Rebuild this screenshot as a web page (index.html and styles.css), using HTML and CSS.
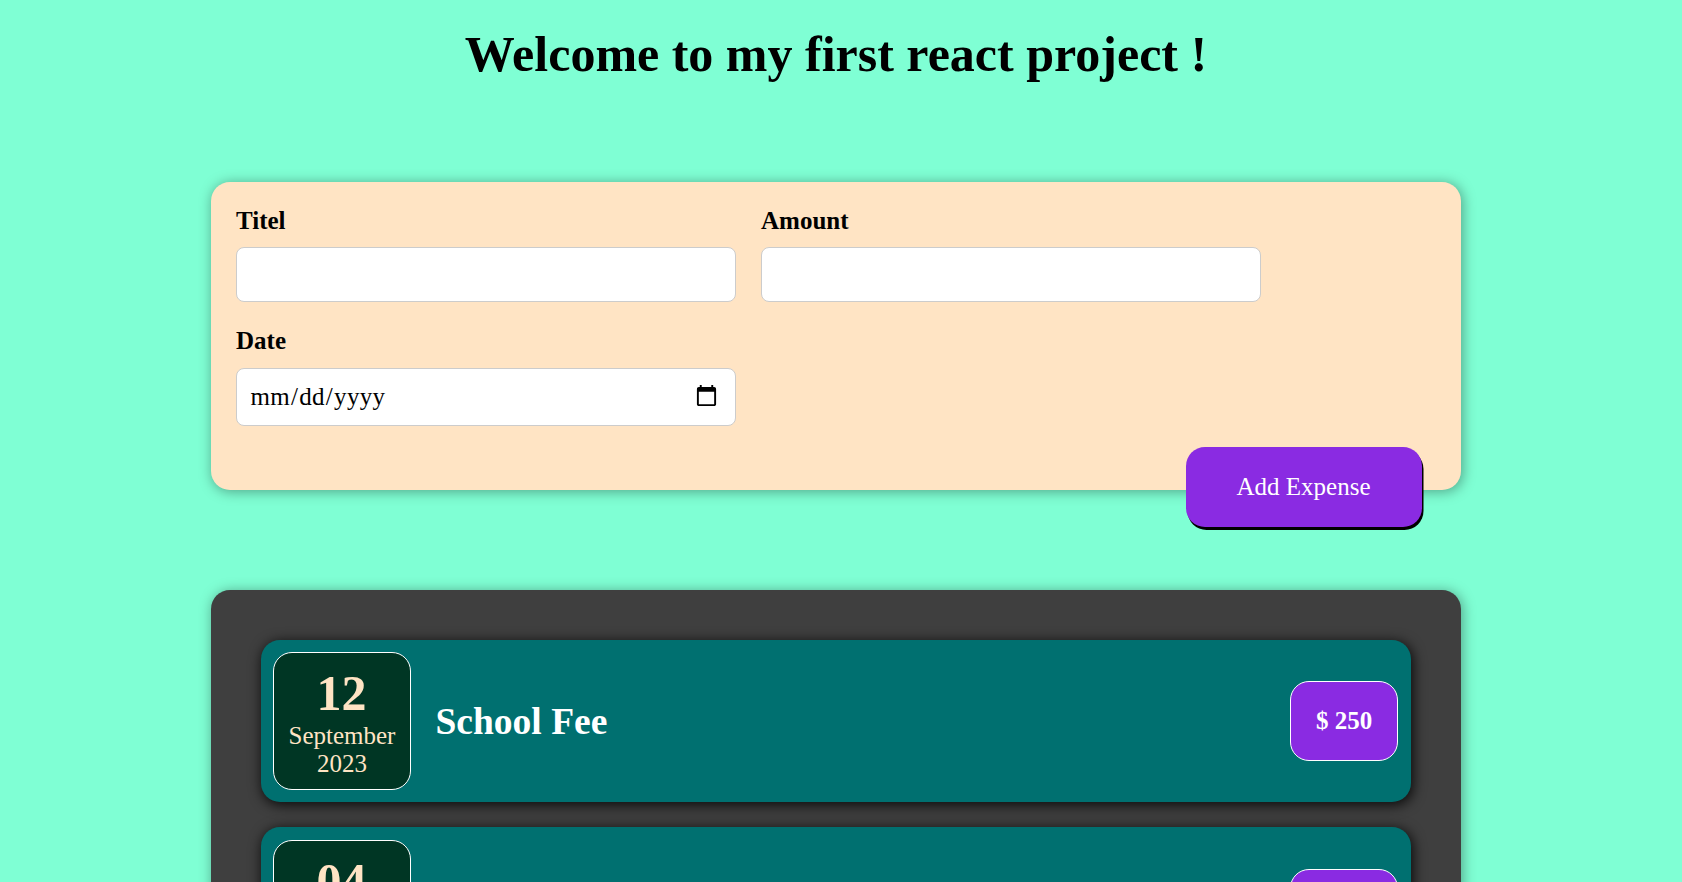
FILE: index.html
```html
<!DOCTYPE html>
<html lang="en-US">
<head>
<meta charset="utf-8">
<title>Expenses</title>
<link rel="stylesheet" href="styles.css">
</head>
<body>
<main class="page">
  <h1 class="heading">Welcome to my first react project !</h1>
  <form class="new-expense">
    <div class="control">
      <label class="label" for="title">Titel</label>
      <input class="input" id="title" type="text">
    </div>
    <div class="control">
      <label class="label" for="amount">Amount</label>
      <input class="input" id="amount" type="number">
    </div>
    <div class="control control-date">
      <label class="label" for="date">Date</label>
      <input class="input input-date" id="date" type="date">
    </div>
    <button class="add" type="button">Add Expense</button>
  </form>
  <section class="expenses">
    <article class="item">
      <div class="date">
        <div class="day">12</div>
        <div class="month">September</div>
        <div class="year">2023</div>
      </div>
      <h2 class="title">School Fee</h2>
      <div class="price">$ 250</div>
    </article>
    <article class="item">
      <div class="date">
        <div class="day">04</div>
      </div>
      <h2 class="title"></h2>
      <div class="price"></div>
    </article>
  </section>
</main>
</body>
</html>
```
FILE: styles.css
```css
* { box-sizing: border-box; }

html, body { height: 100%; }

body {
  margin: 0;
  overflow: hidden;
  background: #7fffd4;
  font-family: "Liberation Serif", "Times New Roman", serif;
  font-size: 25px;
  line-height: 28px;
  color: #000;
}

.page {
  width: 1672px;
  height: 882px;
  overflow: hidden;
  display: flex;
  flex-direction: column;
  align-items: center;
}

.heading {
  flex: none;
  margin: 26px 0 0;
  height: 156px;
  font-size: 50px;
  line-height: 57px;
  white-space: nowrap;
}

.new-expense {
  position: relative;
  flex: none;
  width: 1250px;
  height: 308px;
  padding: 25px;
  display: flex;
  flex-wrap: wrap;
  align-content: flex-start;
  gap: 25px;
  background: bisque;
  border-radius: 19px;
  box-shadow: 1.25px 1.25px 12.5px rgba(0, 0, 0, 0.35);
}

.control {
  width: 500px;
  display: flex;
  flex-direction: column;
  gap: 12px;
}

.control-date { gap: 13px; }

.label { font-weight: bold; }

.input {
  width: 500px;
  height: 55px;
  padding: 12.5px;
  border: 1px solid #ccc;
  border-radius: 8px;
  background: #fff;
  font: inherit;
}

.input-date {
  height: 58px;
  padding-right: 14px;
  letter-spacing: 0.3px;
}

.input-date::-webkit-calendar-picker-indicator {
  margin-bottom: 2px;
}

.add {
  position: absolute;
  right: 39px;
  bottom: -37px;
  width: 236px;
  height: 80px;
  padding: 0 1px 0 0;
  border: 0;
  border-radius: 19px;
  background: blueviolet;
  color: #fff;
  font: inherit;
  box-shadow: 1.5px 3px 0 #000;
}

.expenses {
  flex: none;
  width: 1250px;
  margin-top: 100px;
  padding: 50px;
  display: flex;
  flex-direction: column;
  gap: 25px;
  background: #3f3f3f;
  border-radius: 19px;
  box-shadow: 1.25px 1.25px 12.5px rgba(0, 0, 0, 0.35);
}

.item {
  height: 162px;
  padding: 12px 13px 12px 12px;
  display: flex;
  align-items: center;
  background: #007070;
  border-radius: 19px;
  box-shadow: 1.25px 2.5px 12.5px rgba(0, 0, 0, 0.85);
}

.item + .item {
  height: 163px;
  padding-top: 13px;
}

.date {
  width: 138px;
  height: 138px;
  padding-top: 12px;
  background: #003624;
  border: 1px solid #fff;
  border-radius: 19px;
  color: bisque;
  text-align: center;
}

.day {
  padding-right: 1px;
  font-size: 50px;
  font-weight: bold;
  line-height: 57px;
}

.title {
  flex: 1;
  margin: 2px 0 0 24.5px;
  color: #fff;
  font-size: 37.5px;
  line-height: 42px;
}

.price {
  width: 108px;
  height: 80px;
  display: grid;
  place-items: center;
  background: blueviolet;
  border: 1px solid #fff;
  border-radius: 19px;
  color: #fff;
  font-weight: bold;
}
```
